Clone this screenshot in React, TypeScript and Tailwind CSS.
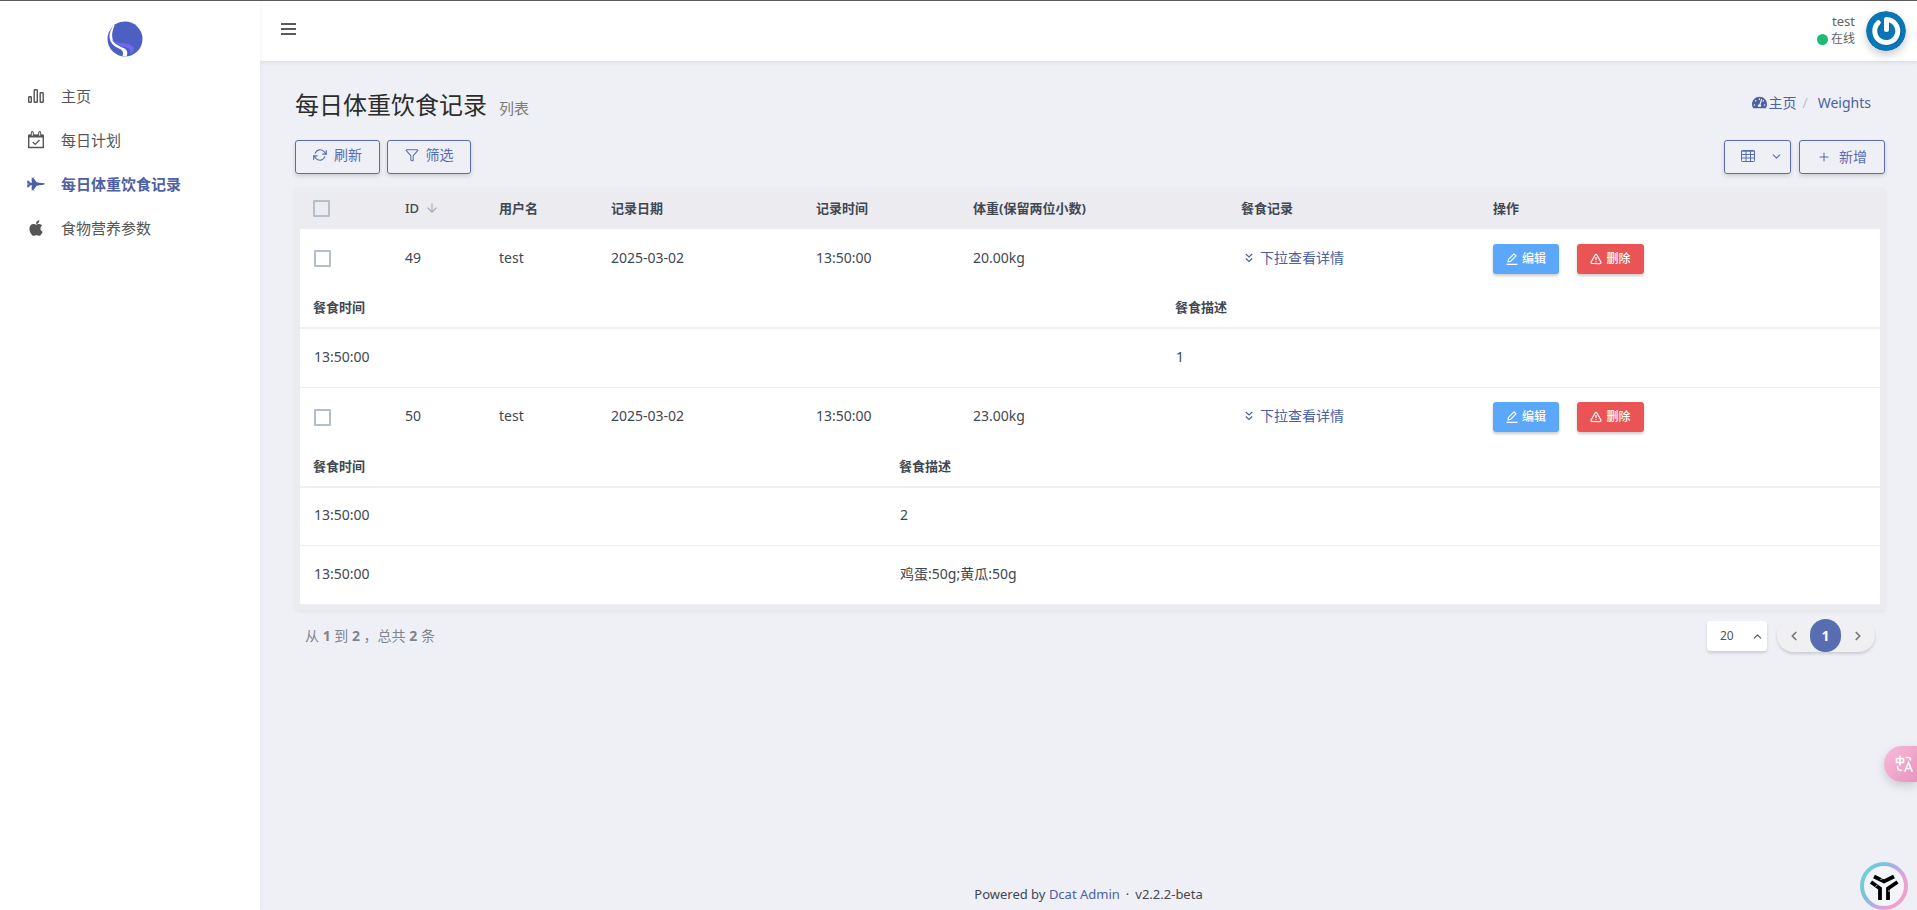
import { useState } from 'react';
import type { ReactNode } from 'react';
import { ArrowDown, ChevronDown, ChevronLeft, ChevronRight, ChevronUp, Filter, Plus, TriangleAlert } from 'lucide-react';
import { FaApple, FaFighterJet, FaTachometerAlt } from 'react-icons/fa';

interface Meal {
  time: string;
  description: string;
}

interface WeightRecord {
  id: number;
  username: string;
  date: string;
  time: string;
  weight: string;
  detailCol: string;
  meals: Meal[];
}

const records: WeightRecord[] = [
  {
    id: 49,
    username: 'test',
    date: '2025-03-02',
    time: '13:50:00',
    weight: '20.00kg',
    detailCol: 'w-[862px]',
    meals: [{ time: '13:50:00', description: '1' }],
  },
  {
    id: 50,
    username: 'test',
    date: '2025-03-02',
    time: '13:50:00',
    weight: '23.00kg',
    detailCol: 'w-[586px]',
    meals: [
      { time: '13:50:00', description: '2' },
      { time: '13:50:00', description: '鸡蛋:50g;黄瓜:50g' },
    ],
  },
];

const columnWidths = ['w-[91px]', 'w-[94px]', 'w-[112px]', 'w-[205px]', 'w-[157px]', 'w-[268px]', 'w-[252px]', ''];

function Logo() {
  return (
    <svg viewBox="0 0 36 36" className="h-9 w-9">
      <circle cx="18" cy="18" r="17.5" fill="#4c60c4" />
      <path d="M7 4C3 9 1.800 14 3 18.500c1 4 4.500 7 8.500 8.800 4 1.700 5.500 3.700 4 7.700l4 .500c1.500-3.500 1-6.500-2.500-8.300-3-1.500-6.500-2.700-9-5C4 18 4.500 11 7.500 5z" fill="#fff" />
      <path d="M4.500 18c3.500 5 9 3.500 14 4.500 5 .800 8.500 2.500 8.500 5.500 0 2.200-1.700 3.800-4 5 1.300-3.500 0-5.500-4-6.800-5-1.600-12-2.200-14.500-8.200z" fill="#7367f0" />
    </svg>
  );
}

function ChartIcon() {
  return (
    <svg viewBox="0 0 16 16" className="h-4 w-4" fill="none" stroke="currentColor" strokeWidth="1.4">
      <rect x=".7" y="8.700" width="2.600" height="5.600" rx=".5" />
      <rect x="6.200" y="1.700" width="3.100" height="12.600" rx=".5" />
      <rect x="12.200" y="4.700" width="3" height="9.600" rx=".5" />
    </svg>
  );
}

function CalendarIcon() {
  return (
    <svg viewBox="0 0 16 18" className="h-[18px] w-4" fill="none" stroke="currentColor">
      <path d="M.7 4.500h14.600v12H.7z" strokeWidth="1.400" strokeLinejoin="round" />
      <path d="M.5 3.500h15v3H.5z" fill="currentColor" stroke="none" />
      <path d="M4.300 1.500v3M11.700 1.500v3" strokeWidth="3" strokeLinecap="round" />
      <path d="M4.300 1.700v2.600M11.700 1.700v2.600" stroke="#fff" strokeWidth="1" strokeLinecap="round" />
      <path d="M4.800 11l2.400 2.400 4.300-4.400" strokeWidth="1.300" />
    </svg>
  );
}

function RefreshIcon() {
  return (
    <svg viewBox="0 0 16 16" className="h-3.5 w-3.5" fill="none" stroke="currentColor" strokeWidth="1.300" strokeLinecap="round" strokeLinejoin="round">
      <path d="M15.200 3v4h-4M.8 13V9h4" />
      <path d="M2.500 6a6 6 0 0 1 9.900-2.200L15 7M1 9l2.600 3.200A6 6 0 0 0 13.500 10" />
    </svg>
  );
}

function TableIcon() {
  return (
    <svg viewBox="0 0 14 12" className="h-3 w-3.5" fill="none" stroke="currentColor" strokeWidth="1">
      <rect x=".5" y=".5" width="13" height="11" rx=".8" />
      <path d="M0 1.200h14M0 4.500h14M0 8h14M5 0v12M9.500 0v12" />
    </svg>
  );
}

function EditIcon() {
  return (
    <svg viewBox="0 0 12 12" className="h-3 w-3" fill="none" stroke="currentColor" strokeWidth="1.200" strokeLinejoin="round">
      <path d="M2 9l.5-2.600L8 .9 10 2.900 4.600 8.400 2 9zM.5 11.300h11" />
    </svg>
  );
}

function DoubleDownIcon() {
  return (
    <svg viewBox="0 0 8 10" className="h-2.5 w-2" fill="none" stroke="currentColor" strokeWidth="1.200">
      <path d="M.8 1L4 4l3.200-3M.8 5.500l3.200 3 3.200-3" />
    </svg>
  );
}

function Avatar() {
  return (
    <svg viewBox="0 0 40 40" className="h-10 w-10 rounded-full shadow-[0_4px_8px_rgba(0,0,0,0.2)]">
      <circle cx="20" cy="20" r="20" fill="#0a76b7" />
      <g fill="none" strokeLinecap="round" strokeWidth="5">
        <path d="M20.500 9.500v9M12.800 12a11.300 11.300 0 1 0 7.700-3.500" stroke="#075787" opacity=".5" transform="translate(.8 1)" />
        <path d="M20.500 8.800v9.700M12.300 11.700A11.500 11.500 0 1 0 20.500 8.500" stroke="#fff" />
      </g>
    </svg>
  );
}

function AssistantIcon() {
  return (
    <svg viewBox="0 0 48 48" className="h-12 w-12">
      <defs>
        <linearGradient id="ring" x1="0" y1=".2" x2="1" y2=".8">
          <stop offset="0" stopColor="#72cfd8" />
          <stop offset=".3" stopColor="#7cc0e0" />
          <stop offset=".55" stopColor="#bda9e8" />
          <stop offset=".8" stopColor="#efa0cf" />
          <stop offset="1" stopColor="#f0a0c8" />
        </linearGradient>
      </defs>
      <circle cx="24" cy="24" r="22" fill="#f3f5fa" stroke="url(#ring)" strokeWidth="4" />
      <g fill="none" stroke="#000" strokeWidth="3.800">
        <path d="M14 14.500l10 5 10-5M11 20l9 6.500V38M37.500 20L28 26.500V38" />
      </g>
      <path d="M20.500 17.500l2.500-1M15.500 24.500l2-1.500M28 29h3" stroke="#f3f5fa" strokeWidth=".8" />
    </svg>
  );
}

function TranslateIcon() {
  return (
    <svg viewBox="0 0 18 18" className="h-[18px] w-[18px]" fill="none" stroke="#fff" strokeWidth="1.600" strokeLinecap="round">
      <path d="M1.500 3.500h7v4h-7zM5 1v9M11.500 2.500h2q2 0 2 2.500M2.500 11.500q0 4 4 4M10 16l3.500-8.500L17 16M11.300 13.500h4.400" />
    </svg>
  );
}

const menu: { label: string; icon: ReactNode; active?: boolean }[] = [
  { label: '主页', icon: <ChartIcon /> },
  { label: '每日计划', icon: <CalendarIcon /> },
  { label: '每日体重饮食记录', icon: <FaFighterJet className="h-[18px] w-[18px]" />, active: true },
  { label: '食物营养参数', icon: <FaApple className="h-[18px] w-4" /> },
];

function Sidebar() {
  return (
    <aside className="z-10 w-[260px] shrink-0 bg-white shadow-[0_0_6px_rgba(0,0,0,0.06)]">
      <a href="#" aria-label="Dcat Admin" className="flex justify-center pt-5 pr-[11px]">
        <Logo />
      </a>
      <nav className="mt-[17px]">
        {menu.map((item) => (
          <a
            key={item.label}
            href="#"
            className={`flex h-11 items-center pl-[26px] text-[15px] ${
              item.active ? 'font-bold text-[#4c60a3]' : 'text-[#555]'
            }`}
          >
            <span className="mr-[15px] flex w-5 justify-center">{item.icon}</span>
            {item.label}
          </a>
        ))}
      </nav>
    </aside>
  );
}

function Navbar() {
  return (
    <header className="flex h-[60px] items-center justify-between bg-white pr-[11px] pl-[21px] shadow-[0_1px_4px_rgba(0,0,0,0.1)]">
      <button type="button" aria-label="菜单" className="mb-1 flex w-[15px] flex-col gap-[3px]">
        <span className="h-0.5 w-full bg-[#5a5a5a]" />
        <span className="h-0.5 w-full bg-[#5a5a5a]" />
        <span className="h-0.5 w-full bg-[#5a5a5a]" />
      </button>
      <div className="flex items-center gap-[11px]">
        <div className="flex flex-col items-end pb-0.5 text-[#626262]">
          <span className="text-[13px] leading-[18px]">test</span>
          <span className="flex items-center gap-[3px] text-xs leading-[18px]">
            <i className="h-[11px] w-[11px] rounded-full bg-[#21b978]" />
            在线
          </span>
        </div>
        <Avatar />
      </div>
    </header>
  );
}

function Checkbox({ label }: { label: string }) {
  return (
    <input
      type="checkbox"
      aria-label={label}
      className="block h-[17px] w-[17px] appearance-none rounded-[1px] border-2 border-[#b4bfc9] checked:bg-[#586cb1]"
    />
  );
}

const outlineButton =
  'flex h-[34px] items-center justify-center rounded-[3px] border border-[#586cb1] text-sm text-[#586cb1] shadow-[0_2px_4px_rgba(0,0,0,0.14)]';
const rowButton =
  'flex h-[30px] items-center justify-center gap-1 rounded-[3px] text-xs font-medium text-white shadow-[0_2px_3px_rgba(0,0,0,0.2)]';

function MealTable({ record }: { record: WeightRecord }) {
  return (
    <table className="w-full table-fixed text-left">
      <colgroup>
        <col className={record.detailCol} />
        <col />
      </colgroup>
      <thead>
        <tr className="h-10 border-b-2 border-[#edf1f7] text-[13px] text-[#414750]">
          <th className="px-[13px] font-bold">餐食时间</th>
          <th className="px-[13px] font-bold">餐食描述</th>
        </tr>
      </thead>
      <tbody>
        {record.meals.map((meal, i) => (
          <tr key={i} className="h-[59px] border-b border-[#edf1f7]">
            <td className="px-[14px] pb-0.5">{meal.time}</td>
            <td className="px-[14px] pb-0.5">{meal.description}</td>
          </tr>
        ))}
      </tbody>
    </table>
  );
}

function RecordRows({ record }: { record: WeightRecord }) {
  return (
    <>
      <tr className="h-[59px] bg-white">
        <td className="px-[14px]">
          <Checkbox label={`选择 ${record.id}`} />
        </td>
        <td className="px-[14px] pb-0.5">{record.id}</td>
        <td className="px-[14px] pb-0.5">{record.username}</td>
        <td className="px-[14px] pb-0.5">{record.date}</td>
        <td className="px-[14px] pb-0.5">{record.time}</td>
        <td className="px-[14px] pb-0.5">{record.weight}</td>
        <td className="px-[14px] pb-0.5">
          <a href="#" className="flex items-center gap-[7px] pl-1 text-[#4c60a3]">
            <DoubleDownIcon />
            下拉查看详情
          </a>
        </td>
        <td className="px-[14px]">
          <div className="flex gap-[18px]">
            <button type="button" className={`${rowButton} w-[66px] bg-[#5ba8fa]`}>
              <EditIcon />
              编辑
            </button>
            <button type="button" className={`${rowButton} w-[67px] bg-[#ea5455]`}>
              <TriangleAlert size={12} strokeWidth={2.5} />
              删除
            </button>
          </div>
        </td>
      </tr>
      <tr className="bg-white">
        <td colSpan={8} className="p-0">
          <MealTable record={record} />
        </td>
      </tr>
    </>
  );
}

function Grid() {
  return (
    <div className="mt-[13px] overflow-x-auto rounded-sm bg-[#ecebf0] px-[5px] pb-[5px] shadow-[0_2px_4px_rgba(0,0,0,0.05)]">
      <table className="w-full min-w-[1400px] table-fixed text-left text-sm text-[#414750]">
        <colgroup>
          {columnWidths.map((width, i) => (
            <col key={i} className={width} />
          ))}
        </colgroup>
        <thead>
          <tr className="h-[42px] text-[13px]">
            <th className="px-[13px]">
              <Checkbox label="全选" />
            </th>
            <th className="px-[14px] font-medium">
              <span className="flex items-center gap-1.5">
                ID
                <ArrowDown size={14} className="text-[#a5adb5]" />
              </span>
            </th>
            <th className="px-[14px] font-bold">用户名</th>
            <th className="px-[14px] font-bold">记录日期</th>
            <th className="px-[14px] font-bold">记录时间</th>
            <th className="px-[14px] font-bold">体重(保留两位小数)</th>
            <th className="px-[14px] font-bold">餐食记录</th>
            <th className="px-[14px] font-bold">操作</th>
          </tr>
        </thead>
        <tbody>
          {records.map((record) => (
            <RecordRows key={record.id} record={record} />
          ))}
        </tbody>
      </table>
    </div>
  );
}

function Pagination() {
  const [perPage, setPerPage] = useState('20');

  return (
    <div className="flex items-center justify-between pt-[9px] pr-[10px] pl-[10px]">
      <p className="text-sm text-[#7c858e]">
        从 <b>1</b> 到 <b>2</b> ，总共 <b>2</b> 条
      </p>
      <div className="flex items-center gap-[10px]">
        <div className="relative">
          <select
            aria-label="每页条数"
            value={perPage}
            onChange={(e) => setPerPage(e.target.value)}
            className="block h-[30px] w-[60px] appearance-none rounded-[3px] bg-white pl-[13px] text-xs text-[#555] shadow-[0_2px_3px_rgba(0,0,0,0.15)]"
          >
            <option>10</option>
            <option>20</option>
            <option>50</option>
          </select>
          <ChevronUp size={13} className="pointer-events-none absolute top-[9px] right-[3px] text-[#555]" />
        </div>
        <div className="flex h-[33px] items-center rounded-full bg-[#f0f0f2] text-[#777] shadow-[0_2px_3px_rgba(0,0,0,0.15)]">
          <button type="button" aria-label="上一页" className="flex w-[33px] justify-center">
            <ChevronLeft size={14} strokeWidth={3} />
          </button>
          <button type="button" className="h-[33px] w-[31px] rounded-full bg-[#586cb1] text-sm font-bold text-white">
            1
          </button>
          <button type="button" aria-label="下一页" className="flex w-[34px] justify-center">
            <ChevronRight size={14} strokeWidth={3} />
          </button>
        </div>
      </div>
    </div>
  );
}

export default function App() {
  return (
    <div className="flex min-h-screen border-t border-[#5e5e62] bg-[#eff0f6] font-['Noto_Sans','Noto_Sans_CJK_SC',sans-serif]">
      <Sidebar />
      <div className="flex min-w-0 flex-1 flex-col">
        <Navbar />
        <main className="flex-1 pr-8 pl-[35px]">
          <div className="flex h-[79px] items-center justify-between pt-2">
            <h1 className="flex items-baseline gap-3 text-2xl text-[#2c2c2c]">
              每日体重饮食记录
              <small className="text-[15px] text-[#7c7c7c]">列表</small>
            </h1>
            <nav className="flex items-center pr-[14px] pb-1 text-sm text-[#4c60a3]">
              <a href="#" className="flex items-center gap-0.5">
                <FaTachometerAlt size={15} />
                主页
              </a>
              <span className="px-1.5 text-[#b8bcc8]">/</span>
              <a href="#" className="pl-1">
                Weights
              </a>
            </nav>
          </div>

          <div className="flex justify-between">
            <div className="flex gap-[7px]">
              <button type="button" className={`${outlineButton} w-[85px] gap-[7px] pb-1`}>
                <RefreshIcon />
                刷新
              </button>
              <button type="button" className={`${outlineButton} w-[84px] gap-[7px] pb-1`}>
                <Filter size={14} strokeWidth={1.8} />
                筛选
              </button>
            </div>
            <div className="flex gap-2">
              <button type="button" aria-label="列" className={`${outlineButton} w-[67px] gap-[15px] pb-0.5 pl-2`}>
                <TableIcon />
                <ChevronDown size={13} />
              </button>
              <button type="button" className={`${outlineButton} w-[86px] gap-2`}>
                <Plus size={14} strokeWidth={1.8} />
                新增
              </button>
            </div>
          </div>

          <Grid />
          <Pagination />
        </main>
        <footer className="pb-1.5 text-center text-[13px] leading-5 text-[#414750]">
          Powered by{' '}
          <a href="#" className="text-[#4c60a3]">
            Dcat Admin
          </a>
          <span className="px-1.5">·</span>v2.2.2-beta
        </footer>
      </div>

      <button
        type="button"
        aria-label="翻译"
        className="fixed right-0 bottom-32 flex h-9 w-[33px] items-center rounded-l-full bg-linear-to-br from-[#f7bcd8] to-[#e994be] pl-[11px] shadow-[0_4px_10px_rgba(0,0,0,0.15)]"
      >
        <TranslateIcon />
      </button>
      <button type="button" aria-label="助手" className="fixed right-[9px] bottom-0">
        <AssistantIcon />
      </button>
    </div>
  );
}
